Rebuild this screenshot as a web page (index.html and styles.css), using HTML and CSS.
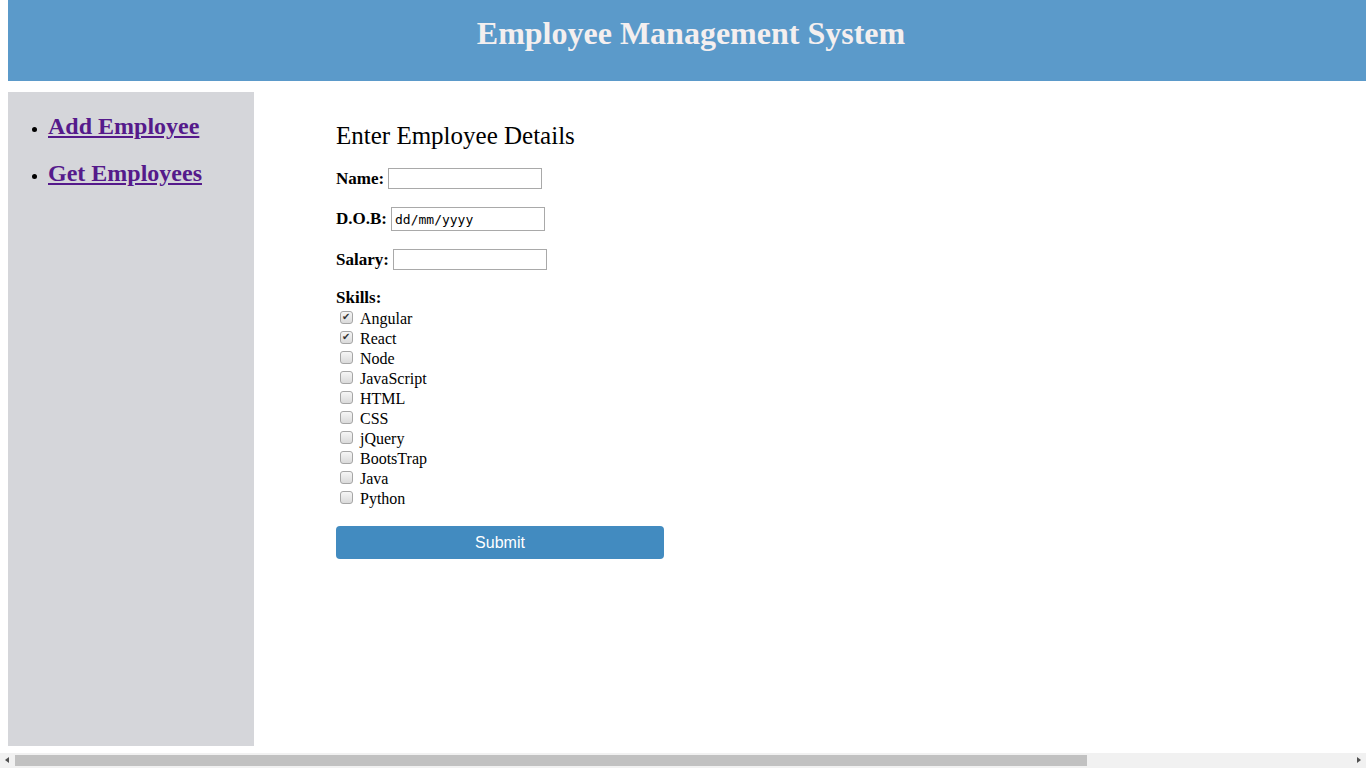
FILE: index.html
```html
<!DOCTYPE html>
<html lang="en">
<head>
<meta charset="utf-8">
<title>Employee Management System</title>
<link rel="stylesheet" href="styles.css">
</head>
<body>
<header class="header">
  <h1 class="title">Employee Management System</h1>
</header>
<div class="layout">
  <nav class="sidebar">
    <ul class="nav-list">
      <li class="nav-item"><a class="nav-link" href="#">Add Employee</a></li>
      <li class="nav-item"><a class="nav-link" href="#">Get Employees</a></li>
    </ul>
  </nav>
  <main class="main">
    <h2 class="form-title">Enter Employee Details</h2>
    <form class="form">
      <div class="row"><label class="label" for="name">Name:</label><input class="field" id="name" type="text"></div>
      <div class="row"><label class="label" for="dob">D.O.B:</label><input class="field date" id="dob" type="text" placeholder="dd/mm/yyyy"></div>
      <div class="row"><label class="label" for="salary">Salary:</label><input class="field" id="salary" type="text"></div>
      <div class="skills-label">Skills:</div>
      <div class="skills">
        <label class="skill"><input class="cb" type="checkbox" checked>Angular</label>
        <label class="skill"><input class="cb" type="checkbox" checked>React</label>
        <label class="skill"><input class="cb" type="checkbox">Node</label>
        <label class="skill"><input class="cb" type="checkbox">JavaScript</label>
        <label class="skill"><input class="cb" type="checkbox">HTML</label>
        <label class="skill"><input class="cb" type="checkbox">CSS</label>
        <label class="skill"><input class="cb" type="checkbox">jQuery</label>
        <label class="skill"><input class="cb" type="checkbox">BootsTrap</label>
        <label class="skill"><input class="cb" type="checkbox">Java</label>
        <label class="skill"><input class="cb" type="checkbox">Python</label>
      </div>
      <button class="submit" type="button">Submit</button>
    </form>
  </main>
</div>
<div class="hscroll" aria-hidden="true">
  <span class="arrow arrow-left"></span>
  <span class="track"><span class="thumb"></span></span>
  <span class="arrow arrow-right"></span>
</div>
</body>
</html>
```
FILE: styles.css
```css
html, body {
  background: #ffffff;
}
body {
  margin: 0 0 0 8px;
  font-family: "Liberation Serif", "Times New Roman", serif;
  font-size: 16px;
  color: #000;
}
.header {
  height: 81px;
  box-sizing: border-box;
  background: #5b9aca;
  padding: 15px 0 0 8px;
}
.title {
  margin: 0;
  text-align: center;
  font-size: 32px;
  font-weight: bold;
  line-height: 37px;
  color: #f4efef;
}
.layout {
  display: flex;
  margin-top: 11px;
}
.sidebar {
  width: 246px;
  height: 654px;
  flex: none;
  background: #d5d6da;
  box-sizing: border-box;
  padding-top: 20px;
}
.nav-list {
  margin: 0;
  padding-left: 40px;
}
.nav-item {
  font-size: 16px;
  line-height: 28px;
  margin-bottom: 16px;
}
.nav-link {
  font-size: 24px;
  font-weight: bold;
  color: #551a8b;
  text-decoration: underline;
}
.main {
  margin-left: 82px;
  padding-top: 30px;
}
.form-title {
  margin: 0 0 18px;
  font-size: 25px;
  font-weight: normal;
  line-height: 28px;
}
.row {
  display: flex;
  align-items: center;
  margin-bottom: 18px;
}
.label {
  font-size: 17px;
  font-weight: bold;
  margin-right: 4px;
}
.field {
  width: 154px;
  height: 21px;
  box-sizing: border-box;
  border: 1px solid #a9a9a9;
  border-radius: 0;
  padding: 1px 3px;
  font-family: "Liberation Sans", Arial, sans-serif;
  font-size: 13px;
  margin: 0;
  background: #fff;
}
.date {
  height: 24px;
  font-family: "DejaVu Sans Mono", "Liberation Mono", monospace;
  font-size: 13px;
}
.date::placeholder {
  color: #000;
  opacity: 1;
}
.skills-label {
  font-size: 17px;
  font-weight: bold;
  line-height: 19px;
  margin-bottom: 2px;
}
.skills {
  display: flex;
  flex-direction: column;
}
.skill {
  display: flex;
  align-items: center;
  height: 20px;
}
.cb {
  appearance: none;
  -webkit-appearance: none;
  width: 13px;
  height: 13px;
  margin: 0 7px 3px 4px;
  box-sizing: border-box;
  border: 1px solid #a6a6a6;
  border-radius: 3px;
  background: linear-gradient(#f6f6f6, #dadada);
  position: relative;
  flex: none;
}
.cb:checked::after {
  content: "\2714";
  position: absolute;
  left: 1px;
  top: -2px;
  font-family: "DejaVu Sans", sans-serif;
  font-size: 10px;
  line-height: 14px;
  color: #333333;
}
.submit {
  display: block;
  margin-top: 17px;
  width: 328px;
  height: 33px;
  border: none;
  border-radius: 4px;
  background: #428bc0;
  color: #ffffff;
  font-family: "Liberation Sans", Arial, sans-serif;
  font-size: 16px;
  padding: 0;
}
.hscroll {
  position: fixed;
  left: 0;
  right: 0;
  bottom: 0;
  height: 15px;
  background: #f1f1f1;
  display: flex;
  align-items: center;
}
.arrow {
  width: 15px;
  height: 15px;
  flex: none;
  position: relative;
}
.arrow::after {
  content: "";
  position: absolute;
  top: 4px;
  border-top: 3.5px solid transparent;
  border-bottom: 3.5px solid transparent;
}
.arrow-left::after {
  left: 5px;
  border-right: 4px solid #505050;
}
.arrow-right::after {
  left: 6px;
  border-left: 4px solid #505050;
}
.track {
  flex: 1;
  height: 15px;
  display: flex;
  align-items: center;
}
.thumb {
  width: 1072px;
  height: 11px;
  background: #c1c1c1;
}
```
